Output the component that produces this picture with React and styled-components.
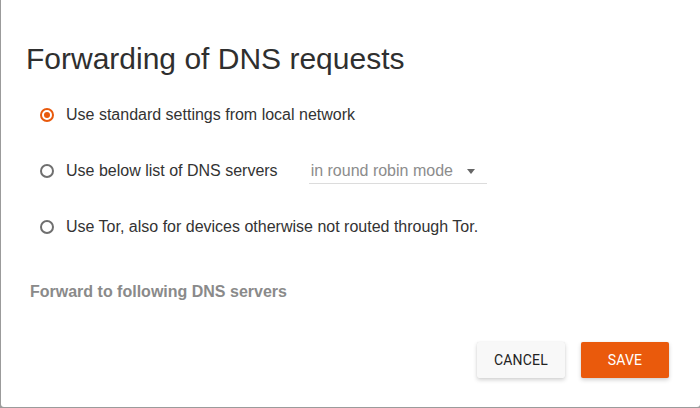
import React, { useState } from "react";
import styled, { createGlobalStyle } from "styled-components";

const Global = createGlobalStyle`
  html, body { margin: 0; padding: 0; }
  body {
    background: #9b9b9b;
    font-family: "Liberation Sans", Arial, sans-serif;
    overflow: hidden;
  }
`;

const Page = styled.div`
  width: 700px;
  height: 408px;
  display: flex;
  padding-left: 1px;
  box-sizing: border-box;
`;

const Dialog = styled.div`
  flex: 1;
  background: #fff;
  border-radius: 0 0 3px 3px;
  display: flex;
  flex-direction: column;
  padding: 41px 31px 0 24px;
  box-sizing: border-box;
  height: 407px;
`;

const Title = styled.h2`
  margin: 0;
  font-family: "Liberation Sans", Arial, sans-serif;
  font-weight: 400;
  font-size: 30px;
  line-height: 36px;
  color: #2f2f2f;
  padding-left: 1px;
`;

const Options = styled.div`
  display: flex;
  flex-direction: column;
  margin-top: 10px;
  padding-left: 15px;
`;

const Row = styled.label`
  display: flex;
  align-items: center;
  height: 56px;
  cursor: pointer;
`;

const Radio = styled.span`
  width: 14px;
  height: 14px;
  box-sizing: border-box;
  border-radius: 50%;
  border: 2px solid ${(p) => (p.$checked ? "#e8590c" : "#6f6f6f")};
  display: flex;
  align-items: center;
  justify-content: center;
  flex: none;
  margin-right: 12px;
  &::after {
    content: "";
    width: 6px;
    height: 6px;
    border-radius: 50%;
    background: ${(p) => (p.$checked ? "#e8590c" : "transparent")};
  }
`;

const Label = styled.span`
  font-size: 16px;
  line-height: 20px;
  color: #333;
`;

const Select = styled.div`
  margin-left: 31px;
  width: 178px;
  height: 25px;
  box-sizing: border-box;
  border-bottom: 1px solid #dcdcdc;
  display: flex;
  align-items: center;
  justify-content: space-between;
  padding: 0 12px 0 2px;
  margin-top: 1px;
  font-size: 16px;
  color: #8c8c8c;
`;

const Caret = styled.span`
  width: 0;
  height: 0;
  border-left: 4px solid transparent;
  border-right: 4px solid transparent;
  border-top: 5px solid #666;
  margin-top: 1px;
`;

const Section = styled.div`
  margin-top: 27px;
  padding-left: 5px;
  font-size: 16px;
  line-height: 20px;
  font-weight: 700;
  color: #8a8a8a;
`;

const Actions = styled.div`
  display: flex;
  justify-content: flex-end;
  gap: 16px;
  margin-top: 40px;
`;

const Button = styled.button`
  width: 88px;
  height: 36px;
  border: none;
  border-radius: 2px;
  font-family: Roboto, "Liberation Sans", sans-serif;
  font-size: 14px;
  font-weight: 400;
  letter-spacing: 0.2px;
  text-transform: uppercase;
  cursor: pointer;
  background: ${(p) => (p.$primary ? "#ea5a0c" : "#f8f8f8")};
  color: ${(p) => (p.$primary ? "#fff" : "#222")};
  box-shadow: 0 2px 4px rgba(0, 0, 0, 0.18), 0 0 1px rgba(0, 0, 0, 0.12);
`;

const options = [
  "Use standard settings from local network",
  "Use below list of DNS servers",
  "Use Tor, also for devices otherwise not routed through Tor.",
];

export default function App() {
  const [sel, setSel] = useState(0);
  return (
    <>
      <Global />
      <Page>
        <Dialog>
          <Title>Forwarding of DNS requests</Title>
          <Options>
            {options.map((o, i) => (
              <Row key={i} onClick={() => setSel(i)}>
                <Radio $checked={sel === i} />
                <Label>{o}</Label>
                {i === 1 && (
                  <Select>
                    <span>in round robin mode</span>
                    <Caret />
                  </Select>
                )}
              </Row>
            ))}
          </Options>
          <Section>Forward to following DNS servers</Section>
          <Actions>
            <Button>Cancel</Button>
            <Button $primary>Save</Button>
          </Actions>
        </Dialog>
      </Page>
    </>
  );
}
